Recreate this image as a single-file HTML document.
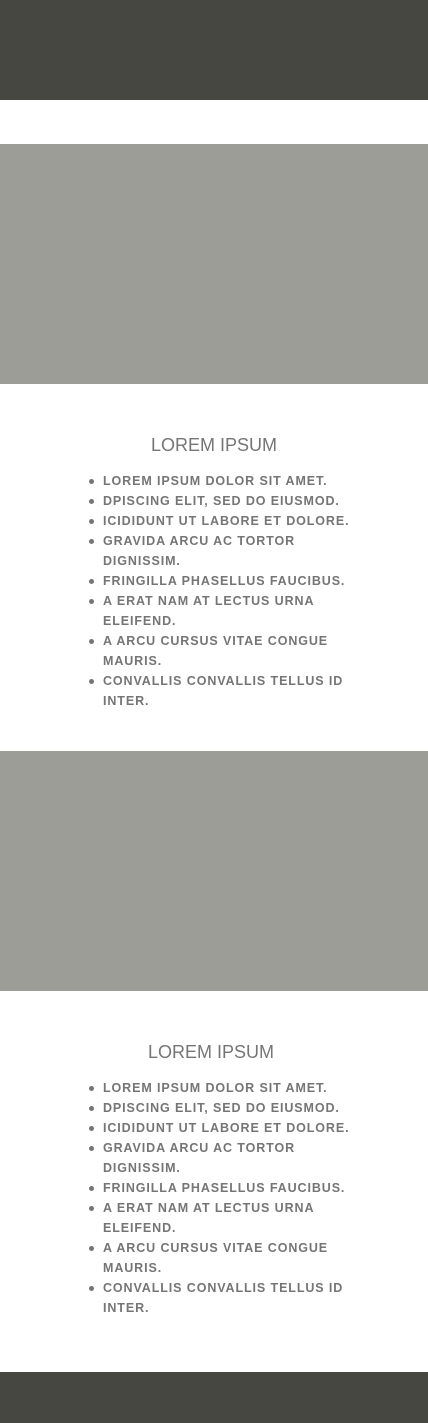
<!DOCTYPE html>
<html><head><meta charset="utf-8"><style>
*{margin:0;padding:0;box-sizing:border-box}
body{width:428px;height:1423px;background:#fff;position:relative;overflow:hidden;font-family:"Liberation Sans",sans-serif;color:#757575}
.blk{position:absolute;left:0;width:428px}
.dark{background:#474742}
.gray{background:#9d9d98}
h2{position:absolute;left:0;width:428px;text-align:center;font-size:18px;font-weight:normal;letter-spacing:0;line-height:24px}
ul{position:absolute;left:88px;list-style:none;font-size:12.5px;font-weight:bold;line-height:20px;letter-spacing:0.9px;white-space:nowrap}
li{position:relative;padding-left:15px}
li.b::before{content:"";position:absolute;left:1px;top:8px;width:5px;height:5px;border-radius:50%;background:#757575}
</style></head><body>
<div class="blk dark" style="top:0;height:100px"></div>
<div class="blk gray" style="top:144px;height:240px"></div>
<h2 style="top:433px;left:0px">LOREM IPSUM</h2>
<ul style="top:471px">
<li class="b">LOREM IPSUM DOLOR SIT AMET.</li>
<li class="b">DPISCING ELIT, SED DO EIUSMOD.</li>
<li class="b">ICIDIDUNT UT LABORE ET DOLORE.</li>
<li class="b">GRAVIDA ARCU AC TORTOR</li>
<li>DIGNISSIM.</li>
<li class="b">FRINGILLA PHASELLUS FAUCIBUS.</li>
<li class="b">A ERAT NAM AT LECTUS URNA</li>
<li>ELEIFEND.</li>
<li class="b">A ARCU CURSUS VITAE CONGUE</li>
<li>MAURIS.</li>
<li class="b">CONVALLIS CONVALLIS TELLUS ID</li>
<li>INTER.</li>
</ul>
<div class="blk gray" style="top:751px;height:240px"></div>
<h2 style="top:1040px;left:-3px">LOREM IPSUM</h2>
<ul style="top:1078px">
<li class="b">LOREM IPSUM DOLOR SIT AMET.</li>
<li class="b">DPISCING ELIT, SED DO EIUSMOD.</li>
<li class="b">ICIDIDUNT UT LABORE ET DOLORE.</li>
<li class="b">GRAVIDA ARCU AC TORTOR</li>
<li>DIGNISSIM.</li>
<li class="b">FRINGILLA PHASELLUS FAUCIBUS.</li>
<li class="b">A ERAT NAM AT LECTUS URNA</li>
<li>ELEIFEND.</li>
<li class="b">A ARCU CURSUS VITAE CONGUE</li>
<li>MAURIS.</li>
<li class="b">CONVALLIS CONVALLIS TELLUS ID</li>
<li>INTER.</li>
</ul>
<div class="blk dark" style="top:1372px;height:51px"></div>
</body></html>
